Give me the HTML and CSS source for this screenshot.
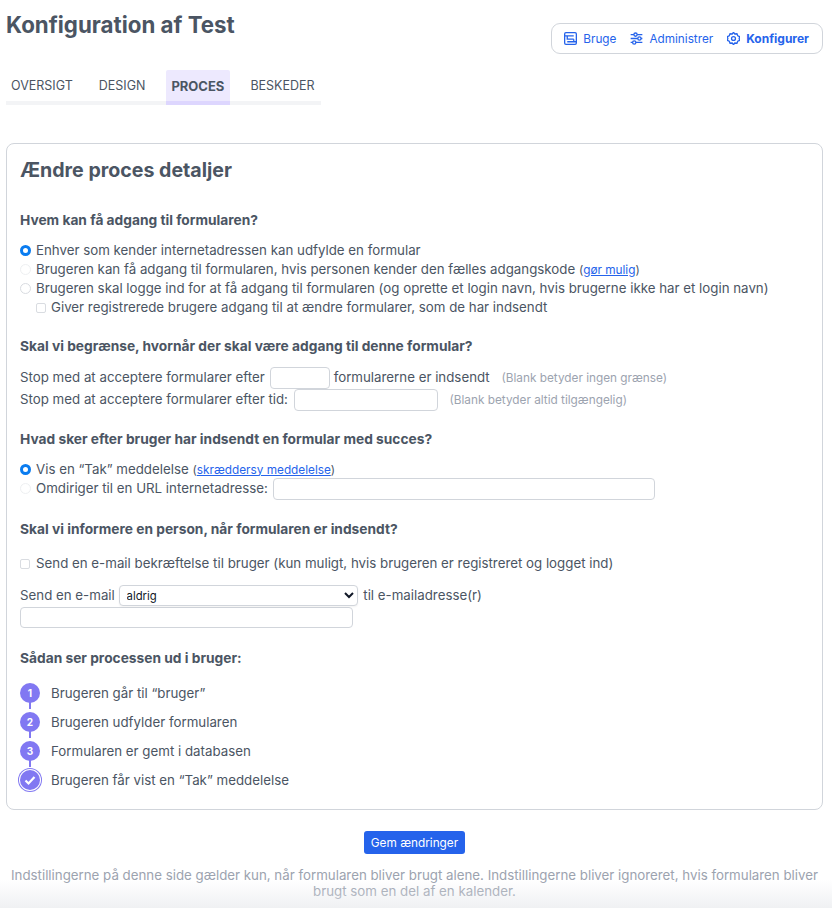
FILE: index.html
```html
<!DOCTYPE html>
<html lang="da">
<head>
    <meta charset="UTF-8">
    <meta name="viewport" content="width=device-width, initial-scale=1.0">
    <title>Konfiguration af Test</title>
    <link rel="stylesheet" href="styles.css">
</head>
<body>
    <div class="page">
        <!-- sidehoved -->
        <div class="top">
            <h1 class="title">Konfiguration af Test</h1>
            <div class="modes">
                <a class="mode">
                    <svg class="mode-icon" viewBox="2 2 20 20"><rect x="3" y="3" width="18" height="18" rx="2"/><path d="M3 8h14M7 8v5h10M7 17h14M17 13v4"/></svg>
                    Bruge
                </a>
                <a class="mode">
                    <svg class="mode-icon" viewBox="2 2 20 20"><path d="M3 6h5M13 6h8M3 12h11M19 12h2M3 18h3M11 18h10"/><circle cx="10.5" cy="6" r="2.5"/><circle cx="16.5" cy="12" r="2.5"/><circle cx="8.5" cy="18" r="2.5"/></svg>
                    Administrer
                </a>
                <a class="mode mode-active">
                    <svg class="mode-icon" viewBox="2 2 20 20"><path d="M12 2.500l2 2.600 3.300-.4 1.200 3.100 3 1.400-.8 2.800.8 2.800-3 1.400-1.200 3.100-3.300-.4-2 2.600-2-2.600-3.300.4-1.200-3.100-3-1.400.8-2.800-.8-2.800 3-1.400 1.200-3.100 3.300.4z"/><circle cx="12" cy="12" r="3"/></svg>
                    Konfigurer
                </a>
            </div>
        </div>

        <!-- faner -->
        <div class="tabs">
            <a class="tab">OVERSIGT</a>
            <a class="tab">DESIGN</a>
            <a class="tab tab-active">PROCES</a>
            <a class="tab">BESKEDER</a>
        </div>

        <div class="card">
            <h2 class="card-title">Ændre proces detaljer</h2>

            <section class="group group-access">
                <h3 class="group-title">Hvem kan få adgang til formularen?</h3>
                <div class="row"><span class="radio radio-on"></span>Enhver som kender internetadressen kan udfylde en formular</div>
                <div class="row"><span class="radio radio-faint"></span>Brugeren kan få adgang til formularen, hvis personen kender den fælles adgangskode <span class="small">(<a class="link">gør mulig</a>)</span></div>
                <div class="row"><span class="radio"></span>Brugeren skal logge ind for at få adgang til formularen (og oprette et login navn, hvis brugerne ikke har et login navn)</div>
                <div class="row row-sub"><span class="check"></span>Giver registrerede brugere adgang til at ændre formularer, som de har indsendt</div>
            </section>

            <section class="group">
                <h3 class="group-title">Skal vi begrænse, hvornår der skal være adgang til denne formular?</h3>
                <div class="row row-field">Stop med at acceptere formularer efter <input class="input input-count" type="text"> formularerne er indsendt <span class="hint">(Blank betyder ingen grænse)</span></div>
                <div class="row row-field">Stop med at acceptere formularer efter tid: <input class="input input-time" type="text"> <span class="hint">(Blank betyder altid tilgængelig)</span></div>
            </section>

            <section class="group">
                <h3 class="group-title">Hvad sker efter bruger har indsendt en formular med succes?</h3>
                <div class="row"><span class="radio radio-on"></span>Vis en “Tak” meddelelse <span class="small">(<a class="link">skræddersy meddelelse</a>)</span></div>
                <div class="row row-field row-url"><span class="radio radio-faint"></span>Omdiriger til en URL internetadresse: <input class="input input-url" type="text"></div>
            </section>

            <section class="group group-low">
                <h3 class="group-title group-title-wide">Skal vi informere en person, når formularen er indsendt?</h3>
                <div class="row row-confirm"><span class="check check-left"></span>Send en e-mail bekræftelse til bruger (kun muligt, hvis brugeren er registreret og logget ind)</div>
                <div class="row row-field">Send en e-mail
                    <select class="select"><option>aldrig</option></select>
                    til e-mailadresse(r)
                </div>
                <input class="input input-mail" type="text">
            </section>

            <section class="group group-low">
                <h3 class="group-title">Sådan ser processen ud i bruger:</h3>
                <ol class="steps">
                    <li class="step"><span class="step-dot">1</span>Brugeren går til “bruger”</li>
                    <li class="step"><span class="step-dot">2</span>Brugeren udfylder formularen</li>
                    <li class="step"><span class="step-dot">3</span>Formularen er gemt i databasen</li>
                    <li class="step"><span class="step-dot step-done"><svg viewBox="0 0 14 14"><path d="M2.500 7.500l3 3 6-6.500"/></svg></span>Brugeren får vist en “Tak” meddelelse</li>
                </ol>
            </section>
        </div>

        <div class="actions">
            <button class="save" type="button">Gem ændringer</button>
        </div>
        <p class="note">Indstillingerne på denne side gælder kun, når formularen bliver brugt alene. Indstillingerne bliver ignoreret, hvis formularen bliver brugt som en del af en kalender.</p>
    </div>
    <div class="fade"></div>
</body>
</html>
```

FILE: styles.css
```css
* {
    box-sizing: border-box;
}
html, body {
    height: 908px;
    overflow: hidden;
}
body {
    margin: 0;
    background-color: white;
    font-family: Inter, 'Noto Sans', sans-serif;
    font-size: 13.3px;
    color: #4b5563;
}
.page {
    padding: 0 9px 0 6px;
}

/* sidehoved */
.top {
    display: flex;
    justify-content: space-between;
    align-items: flex-start;
    height: 70px;
    padding-top: 11px;
}
.title {
    margin: 0;
    font-size: 22.3px;
    line-height: 28px;
    font-weight: 700;
    color: #4b5563;
}
.modes {
    display: flex;
    align-items: center;
    gap: 14px;
    height: 31px;
    margin-top: 12px;
    padding: 0 13px 0 12px;
    border: 1px solid #d1d5db;
    border-radius: 9px;
    font-size: 11.75px;
    color: #2563eb;
}
.mode {
    display: flex;
    align-items: center;
    gap: 6px;
}
.mode-active {
    font-size: 12px;
    font-weight: 700;
}
.mode-icon {
    width: 13px;
    height: 13px;
    fill: none;
    stroke: #2563eb;
    stroke-width: 2;
}

/* faner */
.tabs {
    display: flex;
    width: 315px;
    height: 35px;
    border-bottom: 4px solid #f3f4f6;
}
.tab {
    height: 35px;
    padding: 8px 5.5px 0;
    margin-right: 15px;
    font-size: 12.5px;
    line-height: 16px;
}
.tab:first-child {
    padding-left: 5px;
}
.tab-active {
    background-color: #ede9fe;
    border-bottom: 4px solid #ddd6fe;
    border-radius: 2px 2px 0 0;
    font-size: 13px;
    font-weight: 700;
}

/* kort */
.card {
    height: 667px;
    margin-top: 38px;
    padding: 13px 13px 0;
    border: 1px solid #d1d5db;
    border-radius: 8px;
}
.card-title {
    margin: 0;
    font-size: 19.6px;
    line-height: 26px;
    font-weight: 700;
}
.group {
    margin-top: 20px;
}
.group-access {
    margin-top: 28px;
}
.group-low {
    margin-top: 21px;
}
.group-title {
    margin: 0 0 11.5px;
    font-size: 13.75px;
    line-height: 18px;
    font-weight: 700;
}
.group-title-wide {
    margin-bottom: 15.5px;
}
.row {
    height: 19px;
    line-height: 19px;
    white-space: nowrap;
}
.row-sub {
    padding-left: 16px;
}
.row-field {
    height: 22px;
    line-height: 22px;
}
.row-url {
    margin-top: -1.5px;
}
.row-confirm {
    margin-bottom: 11px;
}
.radio {
    display: inline-block;
    vertical-align: -1px;
    width: 11px;
    height: 11px;
    margin-right: 5px;
    border: 1px solid #d9dce1;
    border-radius: 50%;
}
.radio-faint {
    border-color: #eef0f2;
}
.radio-on {
    border: 3px solid #0a7cf0;
}
.check {
    display: inline-block;
    vertical-align: -1px;
    width: 10px;
    height: 10px;
    margin-right: 5px;
    border: 1px solid #d9dce1;
    border-radius: 2px;
}
.check-left {
    margin-right: 6px;
}
.small {
    font-size: 11.8px;
}
.link {
    color: #2563eb;
    text-decoration: underline;
}
.hint {
    margin-left: 8px;
    font-size: 11.8px;
    color: #9ca3af;
}
.input {
    vertical-align: middle;
    height: 22px;
    padding: 0 4px;
    border: 1px solid #d1d5db;
    border-radius: 4px;
    background-color: white;
}
.input-count {
    width: 60px;
    margin-left: 1.5px;
}
.input-time {
    width: 144px;
    margin-left: 2px;
}
.input-url {
    width: 382px;
    margin-left: 1px;
}
.input-mail {
    display: block;
    width: 333px;
    height: 21px;
    margin-top: 1px;
}
.select {
    vertical-align: middle;
    width: 239px;
    height: 21px;
    margin-right: 2px;
    padding: 0 2px 0 3px;
    border: 1px solid #d1d5db;
    border-radius: 4px;
    background-color: white;
    box-shadow: 0 1px 2px rgba(0, 0, 0, 0.05);
    font-family: inherit;
    font-size: 11.3px;
    color: #111827;
}

/* trin */
.steps {
    margin: 0;
    padding: 0;
    list-style: none;
}
.step {
    position: relative;
    display: flex;
    align-items: center;
    gap: 11px;
    height: 29px;
}
.step + .step::before {
    content: "";
    position: absolute;
    left: 9px;
    top: -10px;
    width: 2px;
    height: 12px;
    background-color: #8178f2;
}
.step-dot {
    position: relative;
    display: flex;
    justify-content: center;
    align-items: center;
    flex: none;
    width: 20px;
    height: 20px;
    border-radius: 50%;
    background-color: #8178f2;
    font-size: 10px;
    font-weight: 700;
    color: white;
}
.step-done {
    box-shadow: 0 0 0 1px white, 0 0 0 2px #8178f2;
}
.step-done svg {
    width: 14px;
    height: 14px;
    fill: none;
    stroke: white;
    stroke-width: 2.2;
}

/* bund */
.actions {
    display: flex;
    justify-content: center;
    margin-top: 21px;
}
.save {
    height: 23px;
    padding: 0 7px;
    border: 0;
    border-radius: 3px;
    background-color: #2563eb;
    font-family: inherit;
    font-size: 11.8px;
    color: white;
}
.note {
    margin: 13px 0 0;
    line-height: 16px;
    text-align: center;
    color: #9ca3af;
}
.fade {
    position: absolute;
    left: 0;
    right: 0;
    top: 880px;
    height: 28px;
    background: linear-gradient(rgba(229, 231, 235, 0), rgba(229, 231, 235, 0.6));
}
```
